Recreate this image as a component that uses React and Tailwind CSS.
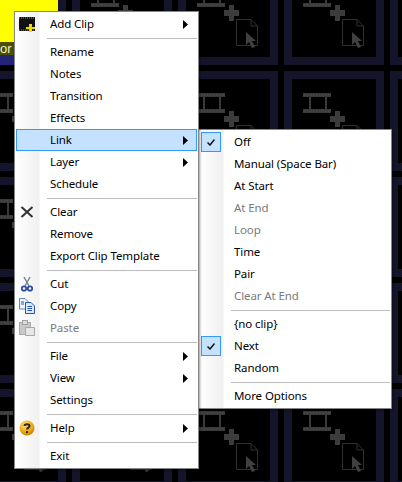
const mainMenu = [
  { label: "Add Clip", icon: "film", arrow: true },
  { sep: true },
  { label: "Rename" },
  { label: "Notes" },
  { label: "Transition" },
  { label: "Effects" },
  { label: "Link", arrow: true, active: true },
  { label: "Layer", arrow: true },
  { label: "Schedule" },
  { sep: true },
  { label: "Clear", icon: "clear" },
  { label: "Remove" },
  { label: "Export Clip Template" },
  { sep: true },
  { label: "Cut", icon: "cut" },
  { label: "Copy", icon: "copy" },
  { label: "Paste", icon: "paste", disabled: true },
  { sep: true },
  { label: "File", arrow: true },
  { label: "View", arrow: true },
  { label: "Settings" },
  { sep: true },
  { label: "Help", icon: "help", arrow: true },
  { sep: true },
  { label: "Exit" },
];

const linkMenu = [
  { label: "Off", checked: true },
  { label: "Manual (Space Bar)" },
  { label: "At Start" },
  { label: "At End", disabled: true },
  { label: "Loop", disabled: true },
  { label: "Time" },
  { label: "Pair" },
  { label: "Clear At End", disabled: true },
  { sep: true },
  { label: "{no clip}" },
  { label: "Next", checked: true },
  { label: "Random" },
  { sep: true },
  { label: "More Options" },
];

function CellArt() {
  return (
    <svg viewBox="0 0 84 84" className="block w-full h-full">
      <rect x="11" y="14" width="28" height="4" fill="#3a3a3a" />
      <rect x="11" y="30" width="28" height="4" fill="#3a3a3a" />
      <path d="M12 16H38M12 32H38" stroke="#4a4a4a" strokeWidth="1.5" strokeDasharray="1.5 1.5" />
      <rect x="17" y="18" width="2" height="12" fill="#3a3a3a" />
      <rect x="33" y="18" width="2" height="12" fill="#3a3a3a" />
      <path d="M43 32h5v5h5v6h-5v5h-5v-5h-5v-6h5z" fill="#3c3c3c" />
      <path d="M50.5 46.5H65L71.5 53V72.5H50.5Z" fill="none" stroke="#303030" />
      <path d="M65 46.5V53H71.5" fill="none" stroke="#303030" />
      <path d="M60 59V72L63 69L66 75L69 74L66 68H70Z" fill="#404040" />
    </svg>
  );
}

function Icon({ name }) {
  if (name === "film")
    return (
      <svg width="17" height="15" viewBox="0 0 17 15" className="block">
        <rect x="0" y="0" width="16" height="14" fill="#111" />
        <path d="M0 1H16M0 13H16" stroke="#888" strokeDasharray="1 1" />
        <path d="M10 7h3v3h3v2h-3v3h-3v-3H7v-2h3z" fill="#f5d800" />
      </svg>
    );
  if (name === "clear")
    return (
      <svg width="16" height="16" viewBox="0 0 16 16" className="block">
        <path d="M2.5 3L13.5 13M13.5 3L2.5 13" stroke="#333" strokeWidth="2" />
      </svg>
    );
  if (name === "cut")
    return (
      <svg width="16" height="16" viewBox="0 0 16 16" className="block">
        <path d="M5 1L10 10M11 1L6 10" stroke="#7a8594" strokeWidth="1.5" />
        <circle cx="5" cy="12.5" r="2.2" fill="none" stroke="#2b4f9e" strokeWidth="1.8" />
        <circle cx="11" cy="12.5" r="2.2" fill="none" stroke="#2b4f9e" strokeWidth="1.8" />
      </svg>
    );
  if (name === "copy")
    return (
      <svg width="16" height="16" viewBox="0 0 16 16" className="block">
        <path d="M0.5 0.5H6L9 3.5V11H0.5Z" fill="#eef4fc" stroke="#5b86c4" />
        <path d="M6.5 4.5H12L15.5 8V15.5H6.5Z" fill="#dbe8f8" stroke="#2b55a5" />
        <path d="M8.5 8.5H13M8.5 10.5H13M8.5 12.5H13M2 4H5M2 6H5" stroke="#2b55a5" />
      </svg>
    );
  if (name === "paste")
    return (
      <svg width="16" height="16" viewBox="0 0 16 16" className="block">
        <rect x="0.5" y="2.5" width="11" height="12" fill="#c9c9c9" stroke="#a8a8a8" />
        <rect x="3.5" y="0.5" width="5" height="4" fill="#dcdcdc" stroke="#a0a0a0" />
        <path d="M6.5 7.5H15.5V15.5H6.5Z" fill="#e6e6e6" stroke="#a8a8a8" />
      </svg>
    );
  if (name === "help")
    return (
      <svg width="16" height="16" viewBox="0 0 16 16" className="block">
        <defs>
          <radialGradient id="helpFill" cx="0.4" cy="0.3" r="0.8">
            <stop offset="0" stopColor="#ffe27a" />
            <stop offset="0.6" stopColor="#eda50f" />
            <stop offset="1" stopColor="#b87200" />
          </radialGradient>
        </defs>
        <circle cx="8" cy="8" r="7.5" fill="url(#helpFill)" />
        <path d="M5.5 6C5.5 3.8 10.5 3.8 10.5 6C10.5 7.6 8 7.6 8 9.6" fill="none" stroke="#2a2a2a" strokeWidth="2" />
        <rect x="7" y="11" width="2" height="2" fill="#2a2a2a" />
      </svg>
    );
  return null;
}

function Check() {
  return (
    <span className="ml-px flex h-5 w-5 items-center justify-center border border-[#3399ff] bg-[#c4e1ff]">
      <svg width="8" height="7" viewBox="0 0 8 7" className="block">
        <path d="M0.5 3.5L3 6L7.5 0.5" fill="none" stroke="#111" strokeWidth="1.5" />
      </svg>
    </span>
  );
}

function Arrow({ active }) {
  return (
    <svg width="5" height="9" viewBox="0 0 5 9" className={"ml-auto block " + (active ? "mr-2" : "mr-[9px]")}>
      <path d="M0 0L5 4.5L0 9Z" fill="#000" />
    </svg>
  );
}

function Row({ item }) {
  if (item.sep) {
    return (
      <div className="h-[6px] pl-[31px] pt-[3px]">
        <div className="h-px bg-[#bcbcbc]" />
      </div>
    );
  }
  return (
    <div
      className={
        "flex h-[22px] items-center " +
        (item.active ? "border border-[#3399ff] bg-[#c4e1ff] " : "") +
        (item.disabled ? "text-[#7a7a7a]" : "text-black")
      }
    >
      <div className={"flex w-[34px] shrink-0 items-center " + (item.active ? "-ml-px" : "")}>
        {item.checked ? (
          <Check />
        ) : item.icon ? (
          <span className="ml-[3px]">
            <Icon name={item.icon} />
          </span>
        ) : null}
      </div>
      <span className="whitespace-nowrap">{item.label}</span>
      {item.arrow && <Arrow active={item.active} />}
    </div>
  );
}

function Menu({ items, className }) {
  return (
    <div
      className={
        "absolute border border-[#868686] bg-[linear-gradient(90deg,#ffffff_0,#f0f0f0_24px,#ffffff_25px)] p-px shadow-[1px_1px_2px_rgba(0,0,0,0.4)] " +
        className
      }
    >
      {items.map((item, i) => (
        <Row key={i} item={item} />
      ))}
    </div>
  );
}

export default function App() {
  return (
    <div className="relative h-[482px] w-[402px] overflow-hidden bg-black font-['Noto_Sans',sans-serif] text-[11.5px] leading-none tracking-[-0.1px]">
      <div className="-ml-[34px] -mt-[35px] grid w-max grid-cols-[repeat(5,100px)] gap-[6px]">
        <div className="flex h-[100px] flex-col border-r-8 border-[#14142a]">
          <div className="flex-1 bg-[#ffff00]" />
          <div className="flex h-[13px] items-center bg-[#4d4d00] pl-[34px] font-['Liberation_Sans',sans-serif] text-[13px] text-[#f0f0d0]">
            or |
          </div>
          <div className="h-[10px] bg-[#23237a]" />
        </div>
        {Array.from({ length: 24 }).map((_, i) => (
          <div key={i} className="h-[100px] border-8 border-[#14142a] bg-black">
            <CellArt />
          </div>
        ))}
      </div>
      <Menu items={linkMenu} className="left-[198px] top-[129px] w-[194px]" />
      <Menu items={mainMenu} className="left-[14px] top-[11px] w-[185px]" />
    </div>
  );
}
